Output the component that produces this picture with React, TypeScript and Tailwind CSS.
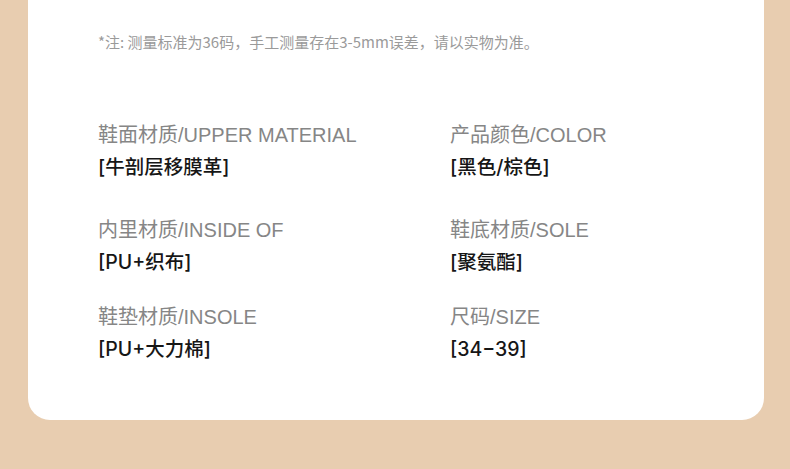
import React from "react";

const items: [string, string, string, string][] = [
  ["鞋面材质/UPPER MATERIAL", "[牛剖层移膜革]", "产品颜色/COLOR", "[黑色/棕色]"],
  ["内里材质/INSIDE OF", "[PU+织布]", "鞋底材质/SOLE", "[聚氨酯]"],
  ["鞋垫材质/INSOLE", "[PU+大力棉]", "尺码/SIZE", "[34−39]"],
];

function Cell({ label, value }: { label: string; value: string }) {
  return (
    <div className="flex flex-col">
      <div className="text-[20px] leading-[28px] text-[#868686] whitespace-nowrap">{label}</div>
      <div
        className="mt-[4px] text-[19.5px] leading-[28px] text-[#161616] font-medium whitespace-nowrap"
        style={{ fontFamily: 'Inter, "Noto Sans CJK SC", sans-serif' }}
      >
        {value}
      </div>
    </div>
  );
}

export default function App() {
  const mts = ["mt-[68px]", "mt-[35px]", "mt-[27px]"];
  return (
    <div
      className="w-[790px] h-[469px] bg-[#e8cdb0] overflow-hidden"
      style={{ fontFamily: '"Liberation Sans", "Noto Sans CJK SC", sans-serif' }}
    >
      <div className="ml-[28px] w-[736px] h-[420px] bg-white rounded-b-[22px] pl-[70px] pt-[31px]">
        <div
          className="text-[15px] leading-[22px] text-[#9a9a9a] whitespace-nowrap"
          style={{ fontFamily: '"Noto Sans CJK SC", sans-serif' }}
        >
          *注: 测量标准为36码，手工测量存在3-5mm误差，请以实物为准。
        </div>
        {items.map((row, i) => (
          <div key={i} className={`grid grid-cols-[352px_1fr] ${mts[i]}`}>
            <Cell label={row[0]} value={row[1]} />
            <Cell label={row[2]} value={row[3]} />
          </div>
        ))}
      </div>
    </div>
  );
}
